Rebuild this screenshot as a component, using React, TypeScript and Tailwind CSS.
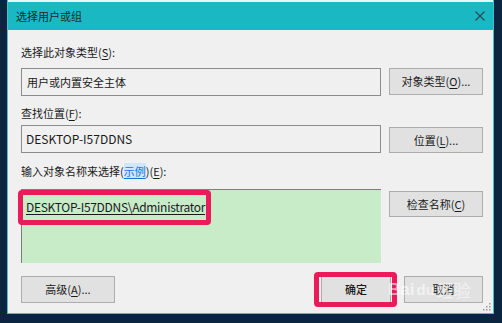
const font = { fontFamily: '"Noto Sans CJK SC", "Noto Sans", sans-serif' };

function Mn({ k }: { k: string }) {
  return (
    <>
      (<span className="underline underline-offset-2">{k}</span>)
    </>
  );
}

function Btn({ children, className = 'w-[94px] h-[27px]' }: { children: React.ReactNode; className?: string }) {
  return (
    <div
      className={`flex shrink-0 items-center justify-center border border-[#adadad] bg-[#e1e1e1] text-[11px] text-[#1a1a1a] ${className}`}
    >
      {children}
    </div>
  );
}

export default function App() {
  return (
    <div
      className="flex h-[323px] w-[502px] bg-[#0b2440] pb-[9px] pl-[7px] pr-[9px]"
      style={font}
    >
      <div className="relative flex flex-1 flex-col border-x border-b border-[#3cc3cf] bg-[#f0f0f0]">
        {/* title bar */}
        <div className="h-[2px] bg-[#e8f6f7]" />
        <div className="flex h-[28px] items-center justify-between bg-[#19b8c3] pl-[8px] pr-[6px]">
          <span className="text-[11px] text-[#1c2b2c]">选择用户或组</span>
          <svg width="12" height="12" viewBox="0 0 12 12" className="mr-[1px]">
            <path d="M1.5 1.5 L10.5 10.5 M10.5 1.5 L1.5 10.5" stroke="#2d4a4d" strokeWidth="1.2" />
          </svg>
        </div>

        <div className="flex flex-1 flex-col pl-[13px] pr-[10px] text-[11px] text-[#1a1a1a]">
          <div className="mt-[14px] h-[16px] leading-[16px]">
            选择此对象类型<Mn k="S" />:
          </div>
          <div className="mt-[8px] flex gap-[8px]">
            <div className="flex h-[28px] w-[360px] items-center border border-[#8c8c8c] bg-[#f0f0f0] pl-[5px]">
              用户或内置安全主体
            </div>
            <Btn>
              对象类型<Mn k="O" />...
            </Btn>
          </div>

          <div className="mt-[9px] h-[16px] leading-[16px]">
            查找位置<Mn k="F" />:
          </div>
          <div className="mt-[4px] flex items-start gap-[8px]">
            <div className="flex h-[28px] w-[360px] items-center border border-[#8c8c8c] bg-[#f0f0f0] pl-[4px] text-[12px]">
              DESKTOP-I57DDNS
            </div>
            <Btn className="mt-[2px] h-[26px] w-[94px]">
              位置<Mn k="L" />...
            </Btn>
          </div>

          <div className="mt-[10px] h-[16px] leading-[16px]">
            输入对象名称来选择(
            <span className="bg-[#cfe6fb] text-[#1a73d9] underline underline-offset-2">示例</span>)<Mn k="E" />:
          </div>
          <div className="mt-[10px] flex items-start gap-[8px]">
            <div className="h-[74px] w-[360px] border-l border-t border-[#7d7d7d] bg-[#c8ebc8] pl-[4px] pt-[8px] text-[12px] tracking-[-0.3px]">
              <span className="underline underline-offset-2">DESKTOP-I57DDNS\Administrator</span>
            </div>
            <Btn className="mt-[2px] h-[26px] w-[94px]">
              检查名称<Mn k="C" />
            </Btn>
          </div>

          <div className="mt-[13px] flex">
            <Btn>
              高级<Mn k="A" />...
            </Btn>
            <div className="flex-1" />
            <Btn className="h-[27px] w-[70px] font-medium">确定</Btn>
            <Btn className="ml-[13px] h-[27px] w-[79px]">取消</Btn>
          </div>
        </div>

        {/* red annotation boxes */}
        <div className="pointer-events-none absolute left-[10px] top-[190px] h-[35px] w-[193px] rounded-[4px] border-[5px] border-[#ea1a5b]" />
        <div className="pointer-events-none absolute left-[306px] top-[272px] h-[35px] w-[83px] rounded-[4px] border-[5px] border-[#ea1a5b]" />

        {/* watermark */}
        <div
          className="pointer-events-none absolute left-[380px] top-[277px] flex items-center text-[17px] font-bold text-white/55"
          style={{ fontFamily: '"Liberation Sans", sans-serif' }}
        >
          <span>Bai</span>
          <span className="ml-[2px] text-[15px]">du</span>
          <span className="ml-[2px] font-normal" style={font}>经验</span>
        </div>

        {/* resize grip */}
        <svg width="8" height="8" viewBox="0 0 8 8" className="absolute bottom-[2px] right-[2px]">
          <rect x="6" y="0" width="1.5" height="1.5" fill="#9a9a9a" />
          <rect x="3" y="3" width="1.5" height="1.5" fill="#9a9a9a" />
          <rect x="6" y="3" width="1.5" height="1.5" fill="#9a9a9a" />
          <rect x="0" y="6" width="1.5" height="1.5" fill="#9a9a9a" />
          <rect x="3" y="6" width="1.5" height="1.5" fill="#9a9a9a" />
          <rect x="6" y="6" width="1.5" height="1.5" fill="#9a9a9a" />
        </svg>
      </div>
    </div>
  );
}
